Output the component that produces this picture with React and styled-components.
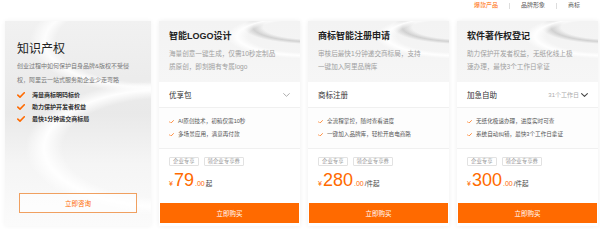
import styled, { createGlobalStyle } from "styled-components";

const GlobalStyle = createGlobalStyle`
  html, body {
    margin: 0;
    padding: 0;
    background: #fff;
  }
  body {
    font-family: "Liberation Sans", "Noto Sans CJK SC", sans-serif;
    color: #333;
  }
`;

const ORANGE = "#ff6a00";

const Page = styled.div`
  width: 600px;
  height: 229px;
  overflow: hidden;
  background: #fff;
`;

const Nav = styled.div`
  height: 21px;
  display: flex;
  justify-content: flex-end;
  align-items: flex-start;
  padding: 1px 20px 0 0;
  box-sizing: border-box;
`;

const NavItem = styled.span`
  font-size: 6px;
  line-height: 9px;
  color: ${(p) => (p.$active ? ORANGE : "#555")};
`;

const NavSep = styled.span`
  width: 1px;
  height: 6px;
  margin: 1.5px 11px 0;
  background: #ddd;
`;

const Row = styled.div`
  display: flex;
  gap: 8px;
  padding-left: 5px;
`;

const IntroCard = styled.div`
  width: 146px;
  height: 205px;
  box-sizing: border-box;
  padding: 19px 12px 13px;
  display: flex;
  flex-direction: column;
  background:
    radial-gradient(160% 55% at 110% 62%, rgba(255,255,255,0) 44%, rgba(255,255,255,0.95) 52%, rgba(255,255,255,0) 60%),
    radial-gradient(130% 40% at 100% 10%, rgba(255,255,255,0) 50%, rgba(255,255,255,0.85) 56%, rgba(255,255,255,0) 64%),
    linear-gradient(180deg, #f1f1f1 0%, #e9e9e9 45%, #f5f5f5 70%, #fbfbfb 100%);
  box-shadow: 0 0 5px rgba(0, 0, 0, 0.05);
`;

const IntroTitle = styled.h1`
  margin: 0;
  font-size: 12px;
  line-height: 18px;
  font-weight: 400;
  color: #222;
`;

const IntroDesc = styled.p`
  margin: 1px 0 0;
  font-size: 6px;
  line-height: 14px;
  color: #777;
`;

const IntroList = styled.ul`
  list-style: none;
  margin: 2px 0 0;
  padding: 0;
`;

const IntroItem = styled.li`
  display: flex;
  align-items: center;
  gap: 7px;
  font-size: 6px;
  line-height: 12px;
  color: #333;
  font-weight: 700;
`;

const ConsultButton = styled.div`
  margin: auto 2px 0;
  height: 18px;
  border: 1px solid #f0a060;
  display: flex;
  align-items: center;
  justify-content: center;
  font-size: 6.5px;
  color: ${ORANGE};
  background: rgba(255, 255, 255, 0.6);
`;

const Card = styled.div`
  width: 141px;
  height: 205px;
  box-sizing: border-box;
  display: flex;
  flex-direction: column;
  background: #fff;
  box-shadow: 0 0 5px rgba(0, 0, 0, 0.07);
`;

const CardHead = styled.div`
  height: 61px;
  box-sizing: border-box;
  padding: 8px 10px 0;
  background:
    radial-gradient(110% 70% at 105% 25%, rgba(255,255,255,0) 38%, rgba(255,255,255,0.95) 45%, rgba(255,255,255,0) 52%),
    radial-gradient(90% 50% at 110% 10%, rgba(200,200,200,0) 40%, rgba(200,200,200,0.8) 48%, rgba(200,200,200,0) 56%),
    linear-gradient(180deg, #f3f3f3 0%, #f6f6f6 100%);
`;

const CardTitle = styled.h2`
  margin: 0;
  font-size: 9px;
  line-height: 14px;
  font-weight: 700;
  color: #222;
  white-space: nowrap;
`;

const CardDesc = styled.p`
  margin: 4px 0 0;
  font-size: 6.6px;
  line-height: 13px;
  color: #a0a0a0;
`;

const Select = styled.div`
  height: 26px;
  box-sizing: border-box;
  padding: 0 10px;
  display: flex;
  align-items: center;
  justify-content: space-between;
  border-bottom: 1px solid #f0f0f0;
  background: #fff;
`;

const SelectLabel = styled.span`
  font-size: 7.5px;
  color: #333;
`;

const SelectExtra = styled.span`
  display: flex;
  align-items: center;
  gap: 2px;
  font-size: 6px;
  color: #aaa;
`;

const Features = styled.ul`
  list-style: none;
  margin: 0;
  padding: 7px 10px;
  border-bottom: 1px solid #f0f0f0;
  background: #fdfdfd;
`;

const Feature = styled.li`
  display: flex;
  align-items: center;
  gap: 4px;
  font-size: 5.6px;
  line-height: 13px;
  color: #555;
  white-space: nowrap;
`;

const PriceBox = styled.div`
  padding: 8px 10px 0;
  flex: 1;
`;

const Tags = styled.div`
  display: flex;
  gap: 5px;
`;

const Tag = styled.span`
  height: 9px;
  box-sizing: border-box;
  padding: 0 3px;
  border: 1px solid #e2e2e2;
  border-radius: 1px;
  font-size: 5.4px;
  line-height: 7px;
  color: #999;
`;

const Price = styled.div`
  margin-top: 4px;
  height: 20px;
  display: flex;
  align-items: baseline;
  color: ${ORANGE};
  line-height: 20px;
`;

const Yen = styled.span`
  font-size: 7px;
  margin-right: 1px;
`;

const Amount = styled.span`
  font-size: 18px;
`;

const Cents = styled.span`
  font-size: 7px;
  margin-left: 1px;
`;

const Unit = styled.span`
  font-size: 6.5px;
  color: #444;
  margin-left: 1px;
`;

const BuyButton = styled.div`
  margin: 0 1px 3px;
  height: 20px;
  background: ${ORANGE};
  color: #fff;
  font-size: 6.5px;
  display: flex;
  align-items: center;
  justify-content: center;
`;

function Check({ size = 8, weight = 1.6 }) {
  return (
    <svg width={size} height={size * 0.75} viewBox="0 0 8 6" fill="none">
      <path d="M0.8 3.1 L3 5.1 L7.3 0.8" stroke={ORANGE} strokeWidth={weight} strokeLinecap="round" strokeLinejoin="round" />
    </svg>
  );
}

function Chevron({ color = "#999", weight = 0.8 }) {
  return (
    <svg width="7" height="4" viewBox="0 0 7 4" fill="none">
      <path d="M0.6 0.6 L3.5 3.3 L6.4 0.6" stroke={color} strokeWidth={weight} strokeLinecap="round" strokeLinejoin="round" />
    </svg>
  );
}

const products = [
  {
    title: "智能LOGO设计",
    desc: ["海量创意一键生成，仅需10秒定制品", "质原创，即刻拥有专属logo"],
    option: "优享包",
    extra: <Chevron />,
    features: ["AI原创技术，初稿仅需10秒", "多场景应用，满意再付款"],
    amount: "79",
    unit: "起",
  },
  {
    title: "商标智能注册申请",
    desc: ["审核后最快1分钟递交商标局，支持", "一键加入阿里品牌库"],
    option: "商标注册",
    extra: null,
    features: ["全流程掌控，随时查看进度", "一键加入品牌库，轻松开启电商路"],
    amount: "280",
    unit: "/件起",
  },
  {
    title: "软件著作权登记",
    desc: ["助力保护开发者权益，无纸化线上极", "速办理，最快3个工作日拿证"],
    option: "加急自助",
    extra: (
      <>
        31个工作日 <Chevron color="#444" weight={1.1} />
      </>
    ),
    features: ["无纸化极速办理，进度实时可查", "系统自动纠错，最快3个工作日拿证"],
    amount: "300",
    unit: "/件起",
  },
];

export default function App() {
  return (
    <Page>
      <GlobalStyle />
      <Nav>
        <NavItem $active>爆款产品</NavItem>
        <NavSep />
        <NavItem>品牌形象</NavItem>
        <NavSep />
        <NavItem>商标</NavItem>
      </Nav>
      <Row>
        <IntroCard>
          <IntroTitle>知识产权</IntroTitle>
          <IntroDesc>
            创业过程中如何保护自身品牌&版权不受侵
            <br />
            权，阿里云一站式服务助企业少走弯路
          </IntroDesc>
          <IntroList>
            <IntroItem>
              <Check />
              海量商标明码标价
            </IntroItem>
            <IntroItem>
              <Check />
              助力保护开发者权益
            </IntroItem>
            <IntroItem>
              <Check />
              最快1分钟递交商标局
            </IntroItem>
          </IntroList>
          <ConsultButton>立即咨询</ConsultButton>
        </IntroCard>

        {products.map((p) => (
          <Card key={p.title}>
            <CardHead>
              <CardTitle>{p.title}</CardTitle>
              <CardDesc>
                {p.desc[0]}
                <br />
                {p.desc[1]}
              </CardDesc>
            </CardHead>
            <Select>
              <SelectLabel>{p.option}</SelectLabel>
              {p.extra && <SelectExtra>{p.extra}</SelectExtra>}
            </Select>
            <Features>
              {p.features.map((f) => (
                <Feature key={f}>
                  <Check size={5} weight={1.2} />
                  {f}
                </Feature>
              ))}
            </Features>
            <PriceBox>
              <Tags>
                <Tag>企业专享</Tag>
                <Tag>领企业专享券</Tag>
              </Tags>
              <Price>
                <Yen>¥</Yen>
                <Amount>{p.amount}</Amount>
                <Cents>.00</Cents>
                <Unit>{p.unit}</Unit>
              </Price>
            </PriceBox>
            <BuyButton>立即购买</BuyButton>
          </Card>
        ))}
      </Row>
    </Page>
  );
}
